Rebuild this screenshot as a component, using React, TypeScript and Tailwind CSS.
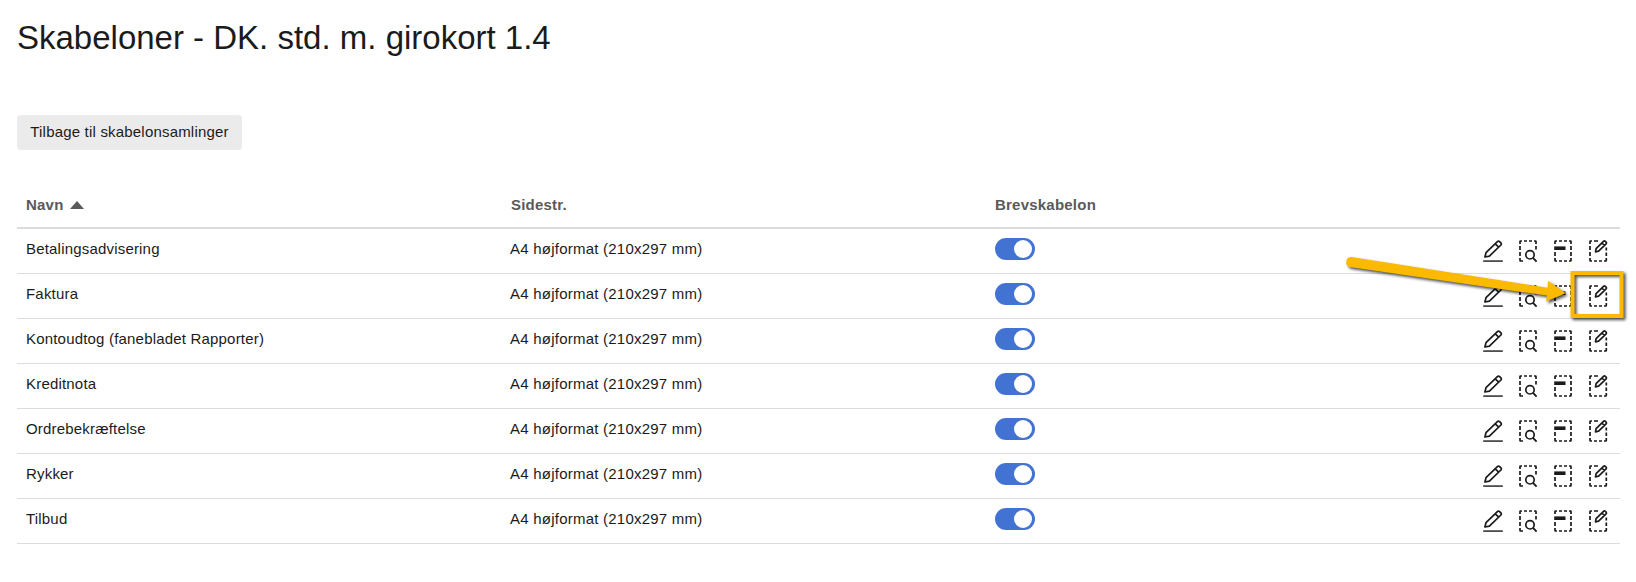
import { useState } from "react";

type Template = {
  name: string;
  pageSize: string;
  letter: boolean;
};

const initialTemplates: Template[] = [
  { name: "Betalingsadvisering", pageSize: "A4 højformat (210x297 mm)", letter: true },
  { name: "Faktura", pageSize: "A4 højformat (210x297 mm)", letter: true },
  { name: "Kontoudtog (fanebladet Rapporter)", pageSize: "A4 højformat (210x297 mm)", letter: true },
  { name: "Kreditnota", pageSize: "A4 højformat (210x297 mm)", letter: true },
  { name: "Ordrebekræftelse", pageSize: "A4 højformat (210x297 mm)", letter: true },
  { name: "Rykker", pageSize: "A4 højformat (210x297 mm)", letter: true },
  { name: "Tilbud", pageSize: "A4 højformat (210x297 mm)", letter: true },
];

export default function App() {
  const [templates, setTemplates] = useState<Template[]>(initialTemplates);

  function toggleLetter(name: string) {
    setTemplates((prev) =>
      prev.map((t) => (t.name === name ? { ...t, letter: !t.letter } : t))
    );
  }

  return (
    <main className="relative h-[582px] w-[1636px] overflow-hidden bg-white pl-[17px] pr-4 font-['Liberation_Sans',Arial,sans-serif] text-[15px] tracking-[0.19px] text-[#1b1b1b]">
      <h1 className="pt-[18px] text-[33px] leading-10 tracking-normal">
        Skabeloner - DK. std. m. girokort 1.4
      </h1>

      <button
        type="button"
        className="mt-[57px] flex h-[35px] w-[225px] items-center justify-center rounded bg-[#ebebeb] pb-px"
      >
        Tilbage til skabelonsamlinger
      </button>

      {/* Table */}
      <div className="mt-[33px]">
        <div className="grid h-[46px] grid-cols-[485px_484px_1fr] items-center border-b-2 border-[#dcdcdc] pl-[9px] font-bold tracking-[0.22px] text-[#5a5a5a]">
          <div className="flex items-center gap-1.5">
            Navn
            <svg viewBox="0 0 14 8" className="h-2 w-3.5" aria-hidden="true">
              <path d="M7 0L14 8H0Z" fill="#5a5a5a" />
            </svg>
          </div>
          <div>Sidestr.</div>
          <div>Brevskabelon</div>
        </div>

        {templates.map((t) => (
          <div
            key={t.name}
            className="grid h-[45px] grid-cols-[484px_485px_1fr_auto] border-b border-[#dcdcdc] pl-[9px] pr-2.5"
          >
            <div className="pt-[9px] leading-[22px]">{t.name}</div>
            <div className="pt-[9px] leading-[22px] tracking-[0.23px]">{t.pageSize}</div>
            <div className="pt-[9px]">
              <Toggle checked={t.letter} onChange={() => toggleLetter(t.name)} />
            </div>
            <div className="flex gap-[11px] pt-2.5">
              <EditIcon />
              <PreviewIcon />
              <HeaderIcon />
              <LayoutIcon />
            </div>
          </div>
        ))}
      </div>

      <Callout />
    </main>
  );
}

function Toggle({ checked, onChange }: { checked: boolean; onChange: () => void }) {
  return (
    <button
      type="button"
      role="switch"
      aria-checked={checked}
      onClick={onChange}
      className={`flex h-[22px] w-10 items-center rounded-full px-[3px] ${
        checked ? "justify-end bg-[#4373d2]" : "justify-start bg-[#b5b5b5]"
      }`}
    >
      <span className="size-[18px] rounded-full bg-white" />
    </button>
  );
}

function EditIcon() {
  return (
    <svg viewBox="0 0 24 24" className="size-6" fill="none" stroke="#1b1b1b" aria-hidden="true">
      <path d="M2.2 22.1H21.8" stroke="#4d4d4d" strokeWidth="1.8" />
      <path
        d="M3.9 18L5 13.7L16.4 2.6C17 2 18 2 18.6 2.6L19.9 3.9C20.5 4.5 20.5 5.4 19.9 6L8.4 17.1L3.9 18ZM14.2 4.8L17.7 8.2"
        strokeWidth="1.7"
        strokeLinejoin="round"
      />
    </svg>
  );
}

function PreviewIcon() {
  return (
    <svg viewBox="0 0 24 24" className="size-6" fill="none" stroke="#1b1b1b" aria-hidden="true">
      <path
        d="M4 5V2.6Q4 2 4.6 2H6M8 2H11M13 2H16M18 2H19.4Q20 2 20 2.6V5M20 7V10.5M4 7V11M4 13V17M4 19V21.4Q4 22 4.6 22H7"
        strokeWidth="1.7"
      />
      <circle cx="14" cy="15.8" r="4.2" strokeWidth="1.7" />
      <path d="M17 18.8L20.6 22.6" strokeWidth="1.9" />
    </svg>
  );
}

function HeaderIcon() {
  return (
    <svg viewBox="0 0 24 24" className="size-6" fill="none" stroke="#1b1b1b" aria-hidden="true">
      <path
        d="M4 5V2.6Q4 2 4.6 2H6M8 2H11M13 2H16M18 2H19.4Q20 2 20 2.6V5M20 7V11M20 13V17M20 19V21.4Q20 22 19.4 22H18M16 22H13M11 22H8M6 22H4.6Q4 22 4 21.4V19M4 17V13"
        strokeWidth="1.7"
      />
      <path d="M3.2 9.2H14.5" strokeWidth="3.6" />
    </svg>
  );
}

function LayoutIcon() {
  return (
    <svg viewBox="0 0 24 24" className="size-6" fill="none" stroke="#1b1b1b" aria-hidden="true">
      <path
        d="M4 5V2.6Q4 2 4.6 2H6M8 2H12M20.3 8.6V11.5M20.3 13.5V17M20.3 19V21.4Q20.3 22 19.7 22H18M16 22H13M11 22H8M6 22H4.6Q4 22 4 21.4V19M4 17V13M4 11V7"
        strokeWidth="1.7"
      />
      <path
        d="M9.5 12.8L10.1 9.7L17.5 2.4C18 1.9 18.8 1.9 19.3 2.4L20.1 3.2C20.6 3.7 20.6 4.4 20.1 4.9L12.6 12.2L9.5 12.8ZM15.9 4L18.5 6.5"
        strokeWidth="1.7"
        strokeLinejoin="round"
      />
    </svg>
  );
}

/** Arrow and frame around the layout button of the invoice template */
function Callout() {
  return (
    <div className="pointer-events-none absolute left-[1336px] top-[240px]">
      <svg
        width="300"
        height="90"
        viewBox="0 0 300 90"
        className="drop-shadow-[2px_2px_1.5px_rgba(0,0,0,0.7)]"
        aria-hidden="true"
      >
        <rect x="236.5" y="33" width="49" height="43" fill="none" stroke="#fbb900" strokeWidth="4" />
        <path
          d="M15.2 17.1L211.5 47.8L212 40.8L229.7 53.3L210 61.5L211 55.6L13.8 26.9A5 5 0 0 1 15.2 17.1Z"
          fill="#fbb900"
        />
      </svg>
    </div>
  );
}
